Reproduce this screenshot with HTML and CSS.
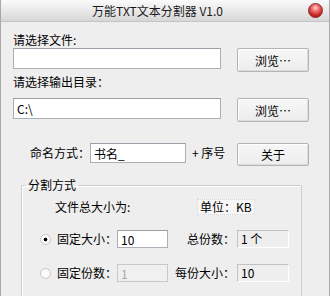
FILE: index.html
```html
<!DOCTYPE html>
<html lang="zh-CN">
<head>
	<meta charset="UTF-8">
	<meta name="viewport" content="width=device-width, initial-scale=1">
	<title>万能TXT文本分割器 V1.0</title>
	<link rel="stylesheet" href="styles.css">
</head>
<body>
	<div class="window">
		<div class="titlebar">
			<span class="title">万能TXT文本分割器 V1.0</span>
			<span class="close"></span>
		</div>
		<div class="content">
			<div class="field-label first">请选择文件:</div>
			<div class="row">
				<input class="path" type="text">
				<button class="btn" type="button">浏览…</button>
			</div>
			<div class="field-label second">请选择输出目录：</div>
			<div class="row out-row">
				<input class="path" type="text" value="C:\">
				<button class="btn" type="button">浏览…</button>
			</div>
			<div class="row naming">
				<span class="naming-label">命名方式：</span>
				<input class="name-input" type="text" value="书名_">
				<span class="suffix">+ 序号</span>
				<button class="btn short" type="button">关于</button>
			</div>
			<fieldset class="group">
				<legend>分割方式</legend>
				<div class="total-row">
					<span class="total-label">文件总大小为:</span>
					<span class="unit">单位：KB</span>
				</div>
				<div class="split-row">
					<input type="radio" name="mode" id="bySize" checked>
					<label for="bySize">固定大小：</label>
					<input class="num" type="text" value="10">
					<span class="side-label">总份数：</span>
					<span class="readout">1 个</span>
				</div>
				<div class="split-row second-split">
					<input type="radio" name="mode" id="byCount">
					<label for="byCount">固定份数：</label>
					<input class="num" type="text" value="1" disabled>
					<span class="side-label">每份大小：</span>
					<span class="readout">10</span>
				</div>
			</fieldset>
		</div>
	</div>
</body>
</html>
```

FILE: styles.css
```css
:root {
	--window-bg: #eeeeee;
	--frame: #a9a9a9;
	--box-border: #aab0b8;
	--text-color: #000;
	--cjk: "Noto Sans CJK SC", "Liberation Sans", sans-serif;
}

body {
	margin: 0;
	padding: 0;
	font-family: var(--cjk);
	font-size: 12px;
	color: var(--text-color);
	background: var(--window-bg);
}

.window {
	width: 330px;
	height: 296px;
	box-sizing: border-box;
	border-left: 1px solid var(--frame);
	border-right: 1px solid var(--frame);
	background: var(--window-bg);
	overflow: hidden;
}

.titlebar {
	display: flex;
	align-items: center;
	height: 21px;
	border-bottom: 1px solid #c4c4c4;
	background: linear-gradient(#fafafa, #e6e6e6 60%, #d6d6d6);
}

.title {
	flex: 1;
	padding-left: 6px;
	text-align: center;
	line-height: 21px;
	color: #1a1a1a;
}

.close {
	width: 15px;
	height: 15px;
	margin-right: 6px;
	border-radius: 50%;
	border: 1px solid #8a2a2a;
	box-sizing: border-box;
	background: radial-gradient(circle at 50% 30%, #ffd6d6 0, #f07070 30%, #c42020 70%, #8e1010 100%);
}

.content {
	padding: 0 20px 0 12px;
}

.field-label {
	line-height: 14px;
	height: 14px;
}

.field-label.first {
	margin-top: 11px;
}

.field-label.second {
	margin-top: 3px;
}

.row {
	display: flex;
	align-items: flex-start;
	margin-top: 1px;
}

.row.out-row {
	margin-top: 9px;
}

input[type="text"] {
	box-sizing: border-box;
	margin: 0;
	padding: 0 3px;
	font-family: var(--cjk);
	font-size: 12px;
	color: #000;
	background: #fff;
	border: 1px solid var(--box-border);
	border-top-color: #9aa0a8;
	outline: none;
}

.path {
	width: 208px;
	height: 21px;
}

.btn {
	box-sizing: border-box;
	width: 72px;
	height: 24px;
	margin: 0 0 0 auto;
	padding: 0;
	font-family: var(--cjk);
	font-size: 12px;
	color: #000;
	background: linear-gradient(#f7f7f7, #ececec);
	border: 1px solid #b4b4b4;
	border-radius: 2px;
	box-shadow: inset 1px 1px 0 #fff, inset -1px -1px 0 #dcdcdc;
}

.btn.short {
	height: 23px;
}

.row.naming {
	margin-top: 21px;
}

.naming-label {
	margin-left: 17px;
	line-height: 20px;
}

.name-input {
	width: 96px;
	height: 20px;
}

.suffix {
	margin-left: 6px;
	line-height: 20px;
}

.group {
	margin: 12px 7px 0 8px;
	padding: 0 0 40px 0;
	border: 1px solid #cfcfcf;
	box-shadow: inset 1px 1px 0 #fff;
}

.group legend {
	margin-left: 4px;
	padding: 0 2px;
	line-height: 14px;
}

.total-row {
	display: flex;
	align-items: center;
	height: 16px;
	margin-top: 7px;
	padding-left: 33px;
}

.total-label {
	width: 142px;
	line-height: 16px;
}

.unit {
	box-sizing: border-box;
	height: 16px;
	padding: 0 2px;
	line-height: 14px;
	background: #f6f6f6;
	border: 1px dotted #d6d6d6;
}

.split-row {
	display: grid;
	grid-template-columns: 17px 60px 51px 69px 52px;
	align-items: center;
	height: 18px;
	margin-top: 15px;
	padding-left: 18px;
}

.split-row.second-split {
	margin-top: 16px;
}

.split-row input[type="radio"] {
	appearance: none;
	width: 11px;
	height: 11px;
	margin: 0;
	border: 1px solid #c8c8c8;
	border-radius: 50%;
	background: radial-gradient(circle, #fff 0, #f4f4f4 100%);
	box-sizing: border-box;
}

.split-row input[type="radio"]:checked {
	background: radial-gradient(circle, #000 0, #000 1.6px, #fff 2.2px, #f4f4f4 100%);
}

.split-row label {
	line-height: 18px;
}

.num {
	width: 51px;
	height: 18px;
}

.num:disabled {
	color: #a8a8a8;
	background: #f0f0f0;
	border-color: #c8c8c8;
}

.side-label {
	padding-right: 2px;
	text-align: right;
	line-height: 18px;
}

.readout {
	box-sizing: border-box;
	height: 18px;
	padding: 0 3px;
	line-height: 16px;
	border: 1px solid #c2c2c2;
	border-right-color: #fff;
	border-bottom-color: #fff;
	background: var(--window-bg);
}
```
